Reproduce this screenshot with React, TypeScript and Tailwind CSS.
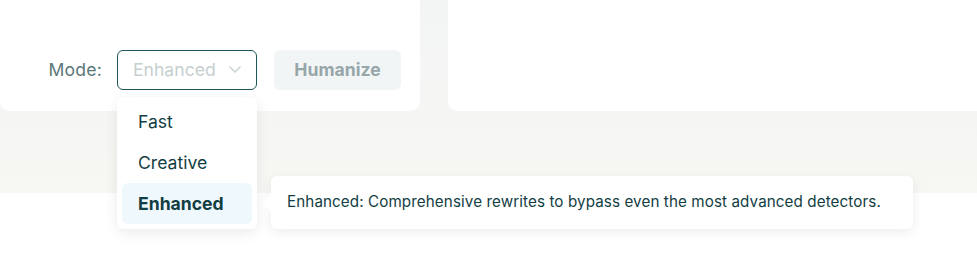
import React from "react";

export default function App() {
  return (
    <div
      className="relative w-[977px] h-[272px] overflow-hidden bg-white"
      style={{ fontFamily: "Inter, 'Noto Sans', sans-serif" }}
    >
      <div className="h-[193px] bg-gradient-to-b from-[#f3f5f5] to-[#f7f7f3] flex gap-[28px]">
        <div className="w-[420px] h-[111px] bg-white rounded-b-[10px] flex items-end justify-end pr-[19px] pb-[21px]">
          <div className="flex items-center">
            <span className="text-[17.6px] tracking-[0.2px] text-[#5b7778] mr-[15px]">Mode:</span>
            <div className="w-[140px] h-[40px] border border-[#1d5558] rounded-[6px] flex items-center pl-[15px] pr-[14px] justify-between">
              <span className="text-[17.6px] text-[#c6cfd0]">Enhanced</span>
              <svg width="14" height="14" viewBox="0 0 14 14" fill="none" className="mt-[-2px]">
                <path d="M1.5 4.5 L7 10 L12.5 4.5" stroke="#c6cfd0" strokeWidth="1.3" />
              </svg>
            </div>
            <div className="ml-[17px] w-[127px] h-[40px] rounded-[6px] bg-[#f2f5f6] flex items-center justify-center">
              <span className="text-[17.6px] font-bold text-[#97a6a9]">Humanize</span>
            </div>
          </div>
        </div>
        <div className="flex-1 h-[111px] bg-white rounded-bl-[10px]" />
      </div>

      <div className="absolute left-[117px] top-[97px] w-[140px] h-[132px] bg-white rounded-[6px] shadow-[0_4px_14px_rgba(0,0,0,0.08)] p-[5px] flex flex-col">
        <div className="h-[41px] flex items-center pl-[16px] pt-[1px] text-[17.6px] text-[#123e43]">Fast</div>
        <div className="h-[41px] flex items-center pl-[16px] pt-[1px] text-[17.6px] text-[#123e43]">Creative</div>
        <div className="h-[42px] flex items-center pl-[16px] pt-[1px] text-[17.6px] font-bold text-[#123e43] bg-[#eff8fc] rounded-[6px]">Enhanced</div>
      </div>

      <div className="absolute left-[271px] top-[176px] w-[642px] h-[53px] bg-white rounded-[6px] shadow-[0_3px_12px_rgba(0,0,0,0.08)] flex items-center pl-[16px]">
        <div className="absolute left-[-9px] top-[18px] w-0 h-0 border-y-[9px] border-y-transparent border-r-[9px] border-r-white" />
        <span className="text-[15.2px] tracking-[0.1px] text-[#123e43]">
          Enhanced: Comprehensive rewrites to bypass even the most advanced detectors.
        </span>
      </div>
    </div>
  );
}
